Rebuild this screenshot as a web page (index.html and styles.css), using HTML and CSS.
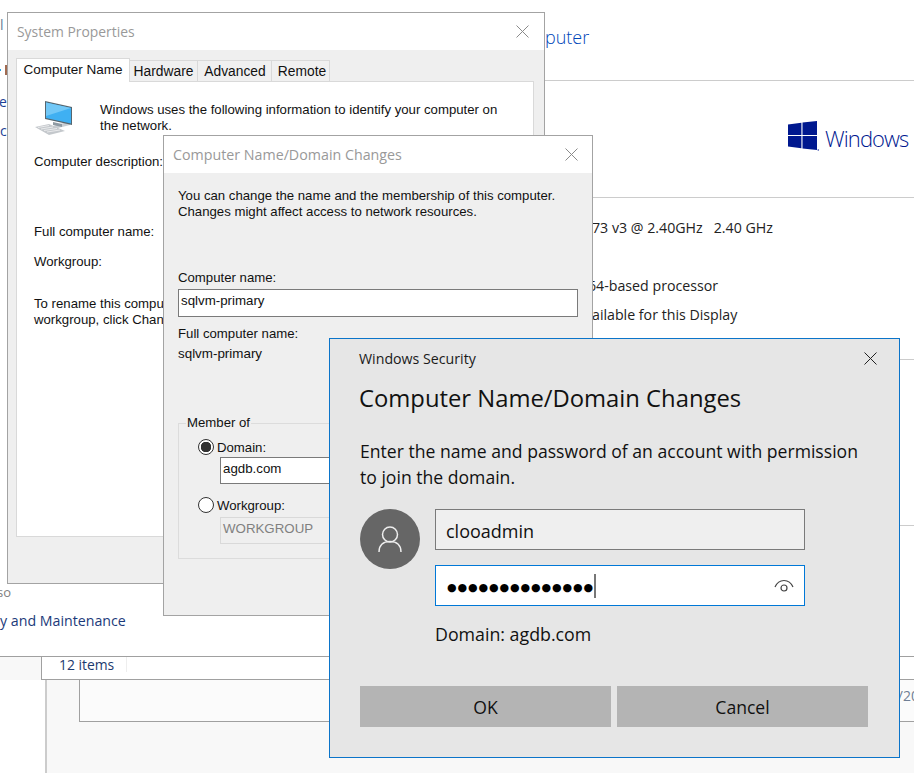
FILE: index.html
```html
<!DOCTYPE html>
<html lang="en">
<head>
    <meta charset="UTF-8">
    <meta name="viewport" content="width=device-width, initial-scale=1.0">
    <title>Computer Name/Domain Changes</title>
    <link rel="stylesheet" href="styles.css">
</head>
<body>
<div class="desktop">

    <!-- Control Panel page behind the dialogs -->
    <div class="cp-top">
        <div class="cp-side">
            <span class="frag-l">l</span>
            <div class="frag-tick"><span class="tick-blue"></span><span class="tick-brown"></span></div>
            <span class="frag-e">e</span>
            <span class="frag-c">ce</span>
            <span class="frag-so">so</span>
            <span class="frag-link">y and Maintenance</span>
        </div>
        <div class="cp-main">
            <div class="cp-head"><span class="cp-title">puter</span></div>
            <div class="cp-edition">
                <svg class="win-logo" viewBox="0 0 31 30" width="31" height="30">
                    <path d="M0 3.6 13.4 1.8V14H0ZM14.5 1.6 29 0V14H14.5ZM0 15H13.4V27.2L0 25.4ZM14.5 15H29V29L14.5 27.4ZM29.6 28.4H31V29.4H29.6Z"/>
                </svg>
                <span class="win-word">Windows</span>
            </div>
            <div class="cp-specs">
                <div class="spec spec-cpu">73 v3 @ 2.40GHz&nbsp;&nbsp; 2.40 GHz</div>
                <div class="spec spec-type">64-based processor</div>
                <div class="spec spec-pen">ailable for this Display</div>
            </div>
            <div class="cp-blank"></div>
        </div>
    </div>
    <div class="status-bar">
        <div class="status-items"><span class="status-count">12 items</span></div>
    </div>
    <div class="list-pane">
        <div class="list-row"><span class="list-date">/20</span></div>
    </div>

    <!-- System Properties -->
    <section class="window win-system">
        <div class="titlebar">
            <span class="titlebar-text">System Properties</span>
            <svg class="close" viewBox="0 0 13 13" width="13" height="13"><path d="M.5.5l12 12M12.5.5l-12 12"/></svg>
        </div>
        <div class="window-body sys-body">
            <div class="tabs">
                <span class="tab tab-active">Computer Name</span>
                <span class="tab tab-hw">Hardware</span>
                <span class="tab tab-adv">Advanced</span>
                <span class="tab tab-rem">Remote</span>
            </div>
            <div class="tab-panel">
                <div class="intro">
                    <svg class="pc-icon" viewBox="0 0 40 36" width="40" height="36">
                        <path d="M16 27l17 -5 3 1 0 2 -16 4z" fill="#c9ced3"/>
                        <path d="M19 22l9 2 0 3-9-2z" fill="#8f9aa3"/>
                        <path d="M11 1 38 7V25L11 19Z" fill="#56666f"/>
                        <path d="M12 2.500 37 8V23.500L12 18Z" fill="#3fb0f2"/>
                        <path d="M12 2.500 37 8 12 16Z" fill="#72c8f7"/>
                        <path d="M1 27 15 24 31 31 15 35Z" fill="#c4c8cc"/>
                        <path d="M4 27.500 15 25.500M7 29 19 27M10 30.500 23 28.500M13 32 26 30" stroke="#f2f3f4" stroke-width=".8" fill="none"/>
                    </svg>
                    <p class="intro-text">Windows uses the following information to identify your computer on<br>the network.</p>
                </div>
                <div class="sys-label sys-desc">Computer description:</div>
                <div class="sys-label sys-full">Full computer name:</div>
                <div class="sys-label sys-group">Workgroup:</div>
                <div class="sys-label sys-rename">To rename this comput<br>workgroup, click Chang</div>
            </div>
        </div>
    </section>

    <!-- Computer Name/Domain Changes -->
    <section class="window win-name">
        <div class="titlebar">
            <span class="titlebar-text">Computer Name/Domain Changes</span>
            <svg class="close" viewBox="0 0 13 13" width="13" height="13"><path d="M.5.5l12 12M12.5.5l-12 12"/></svg>
        </div>
        <div class="window-body name-body">
            <p class="name-intro">You can change the name and the membership of this computer.<br>Changes might affect access to network resources.</p>
            <div class="name-label">Computer name:</div>
            <div class="field field-name">sqlvm-primary</div>
            <div class="full-label">Full computer name:</div>
            <div class="full-value">sqlvm-primary</div>
            <fieldset class="member">
                <legend>Member of</legend>
                <div class="radio-row radio-domain"><span class="radio radio-on"></span>Domain:</div>
                <div class="field field-member">agdb.com</div>
                <div class="radio-row radio-group"><span class="radio"></span>Workgroup:</div>
                <div class="field field-member field-off">WORKGROUP</div>
            </fieldset>
        </div>
    </section>

    <!-- Windows Security credential prompt -->
    <section class="window win-security">
        <div class="sec-head">
            <span class="sec-app">Windows Security</span>
            <svg class="close close-dark" viewBox="0 0 13 13" width="13" height="13"><path d="M.5.5l12 12M12.5.5l-12 12"/></svg>
        </div>
        <h1 class="sec-title">Computer Name/Domain Changes</h1>
        <p class="sec-text">Enter the name and password of an account with permission<br>to join the domain.</p>
        <div class="cred">
            <div class="avatar">
                <svg viewBox="0 0 60 60" width="60" height="60">
                    <circle cx="30" cy="25.500" r="7.500"/>
                    <path d="M19 43c0-7 4.500-10.500 11-10.500S41 36 41 43"/>
                </svg>
            </div>
            <div class="cred-fields">
                <div class="cred-input cred-user">clooadmin</div>
                <div class="cred-input cred-pass">
                    <span class="dots">●●●●●●●●●●●●●●</span><span class="caret"></span>
                    <svg class="eye" viewBox="0 0 20 14" width="20" height="14">
                        <path d="M1 8C3 3.500 6 1.500 10 1.500S17 3.500 19 8"/>
                        <circle cx="10" cy="9" r="3"/>
                    </svg>
                </div>
            </div>
        </div>
        <div class="sec-domain">Domain: agdb.com</div>
        <div class="sec-buttons">
            <button class="sec-btn">OK</button>
            <button class="sec-btn">Cancel</button>
        </div>
    </section>

</div>
</body>
</html>
```

FILE: styles.css
```css
/* General Page Styling */
body {
    margin: 0;
    font-family: 'Liberation Sans', Arial, sans-serif;
    color: #111111;
}

p, h1 {
    margin: 0;
    font-weight: normal;
}

.desktop {
    position: relative;
    width: 914px;
    height: 773px;
    overflow: hidden;
    display: flex;
    flex-direction: column;
    background: #ffffff;
}

/* Control Panel behind the dialogs */
.cp-top {
    display: flex;
    height: 656px;
    font-family: 'Open Sans', sans-serif;
}

.cp-side {
    width: 130px;
    display: flex;
    flex-direction: column;
    white-space: nowrap;
    font-size: 14px;
    line-height: 20px;
}

.frag-l {
    margin-top: 15px;
    color: #6a7f95;
}

.frag-tick {
    display: flex;
    gap: 4px;
    height: 10px;
    margin-top: 30px;
    align-items: center;
}

.tick-blue {
    width: 1px;
    height: 2px;
    background: #29a0e0;
}

.tick-brown {
    width: 2px;
    height: 10px;
    background: #a06a50;
}

.frag-e {
    margin-top: 17px;
    margin-left: -1px;
    color: #1c3f94;
}

.frag-c {
    margin-top: 9px;
    margin-left: 0;
    color: #1c3f94;
}

.frag-so {
    margin-top: 441px;
    margin-left: -3px;
    font-size: 13px;
    color: #808080;
}

.frag-link {
    margin-top: 9px;
    font-size: 14.200px;
    color: #1b3a7a;
}

.cp-main {
    flex: 1;
    display: flex;
    flex-direction: column;
}

.cp-head {
    height: 80px;
    padding-left: 415px;
    border-bottom: 1px solid #cccccc;
    box-sizing: content-box;
}

.cp-title {
    display: block;
    padding-top: 23px;
    font-size: 18px;
    font-weight: 300;
    line-height: 28px;
    color: #0046b8;
}

.cp-edition {
    height: 116px;
    display: flex;
    align-items: flex-start;
    padding-left: 658px;
    border-bottom: 1px solid #cccccc;
}

.win-logo {
    margin-top: 40px;
    fill: #00188f;
}

.win-word {
    margin-left: 6px;
    margin-top: 39px;
    font-size: 22px;
    font-weight: 300;
    line-height: 36px;
    color: #00188f;
    letter-spacing: -0.9px;
}

.cp-specs {
    height: 161px;
    padding-left: 462px;
    border-bottom: 1px solid #cccccc;
    font-size: 14.200px;
    line-height: 20px;
    color: #222222;
}

.spec {
    white-space: nowrap;
}

.spec-cpu {
    margin-top: 20px;
}

.spec-type {
    margin-top: 38px;
    margin-left: -4px;
}

.spec-pen {
    margin-top: 9px;
}

.cp-blank {
    height: 165px;
    border-bottom: 1px solid #cccccc;
}

/* Status bar and file list */
.status-bar {
    height: 23px;
    background: #f8f8f8;
    border-top: 1px solid #a0a0a0;
}

.status-items {
    height: 22px;
    margin-left: 41px;
    padding-left: 17px;
    background: #ffffff;
    border-left: 1px solid #a0a0a0;
    border-bottom: 1px solid #a0a0a0;
    font-family: 'Open Sans', sans-serif;
    font-size: 13.900px;
    line-height: 15px;
    color: #1c3a6e;
}

.status-count {
    display: inline-block;
    padding-right: 12px;
    border-right: 1px solid #eeeeee;
}

.list-pane {
    flex: 1;
    margin-left: 45px;
    background: #f8f8f8;
    border-left: 2px solid #cccccc;
}

.list-row {
    height: 41px;
    margin-left: 32px;
    background: #fbfbfb;
    border-left: 1px solid #a0a0a0;
    border-bottom: 1px solid #a0a0a0;
    display: flex;
    justify-content: flex-end;
    align-items: flex-start;
}

.list-date {
    margin-top: 6px;
    margin-right: -5px;
    font-family: 'Open Sans', sans-serif;
    font-size: 14px;
    line-height: 20px;
    color: #6f7f95;
}

/* Classic dialogs */
.window {
    position: absolute;
    box-sizing: border-box;
    display: flex;
    flex-direction: column;
    border: 1px solid #a3a3a3;
    background: #efefef;
}

.win-system {
    left: 7px;
    top: 12px;
    width: 538px;
    height: 572px;
}

.win-name {
    left: 163px;
    top: 135px;
    width: 430px;
    height: 481px;
}

.titlebar {
    height: 37px;
    flex: none;
    display: flex;
    align-items: center;
    justify-content: space-between;
    padding: 0 14px 0 9px;
    background: #ffffff;
}

.win-system .titlebar {
    padding-right: 15px;
}

.titlebar-text {
    font-family: 'Open Sans', sans-serif;
    font-size: 13.900px;
    color: #999999;
}

.win-name .titlebar-text {
    font-size: 14.250px;
}

.close {
    stroke: #8a8a8a;
    stroke-width: 1;
    fill: none;
}

.close-dark {
    stroke: #222222;
}

.window-body {
    flex: 1;
    min-height: 0;
    font-size: 13.200px;
    line-height: 16px;
}

/* System Properties tabs */
.sys-body {
    padding: 8px 10px 0 8px;
}

.tabs {
    display: flex;
    align-items: flex-end;
    height: 23px;
    font-size: 13.800px;
}

.tab {
    box-sizing: border-box;
    height: 21px;
    padding-top: 3px;
    text-align: center;
    background: #f0f0f0;
    border: 1px solid #d9d9d9;
    border-bottom: none;
    border-left: none;
}

.tab-active {
    position: relative;
    z-index: 1;
    width: 114px;
    height: 24px;
    margin-bottom: -1px;
    padding-top: 3px;
    font-size: 13.500px;
    background: #ffffff;
    border-left: 1px solid #d9d9d9;
}

.tab-hw {
    width: 68px;
}

.tab-adv {
    width: 74px;
    padding-left: 1px;
}

.tab-rem {
    width: 58px;
    padding-left: 3px;
}

.tab-panel {
    box-sizing: border-box;
    height: 456px;
    padding: 0 17px;
    background: #ffffff;
    border: 1px solid #d9d9d9;
    white-space: nowrap;
}

.intro {
    display: flex;
    margin-top: 20px;
}

.pc-icon {
    flex: none;
    margin-top: -2px;
    margin-right: 26px;
}

.sys-desc {
    margin-top: 18px;
}

.sys-full {
    margin-top: 54px;
}

.sys-group {
    margin-top: 14px;
}

.sys-rename {
    margin-top: 26px;
}

/* Computer Name/Domain Changes body */
.name-body {
    padding: 15px 14px 0;
}

.name-label {
    margin-top: 50px;
}

.field {
    box-sizing: border-box;
    height: 28px;
    padding: 3px 2px;
    background: #ffffff;
    border: 1px solid #7a7a7a;
    font-size: 13.300px;
}

.field-name {
    margin-top: 3px;
}

.full-label {
    margin-top: 9px;
}

.full-value {
    margin-top: 4px;
    font-size: 13.400px;
}

.member {
    box-sizing: border-box;
    height: 145px;
    margin: 52px 0 0;
    padding: 0 0 0 19px;
    border: 1px solid #dcdcdc;
}

.member legend {
    margin-left: -12px;
    padding: 0 1px;
    line-height: 18px;
}

.radio-row {
    display: flex;
    align-items: flex-start;
    gap: 3px;
    height: 16px;
    line-height: 18px;
}

.radio-domain {
    margin-top: 7px;
}

.radio-group {
    margin-top: 13px;
}

.radio {
    box-sizing: border-box;
    width: 16px;
    height: 16px;
    background: #ffffff;
    border: 1px solid #333333;
    border-radius: 50%;
}

.radio-on {
    background: radial-gradient(circle, #333333 0 5px, #ffffff 5.500px);
}

.field-member {
    width: 300px;
    height: 27px;
    margin-top: 2px;
    margin-left: 22px;
}

.field-off {
    margin-top: 4px;
    background: #efefef;
    border-color: #d9d9d9;
    color: #808080;
}

/* Windows Security prompt */
.win-security {
    left: 329px;
    top: 338px;
    width: 571px;
    height: 420px;
    padding-left: 30px;
    background: #e6e6e6;
    border-color: #0b74c9;
    font-family: 'Open Sans', sans-serif;
}

.sec-head {
    display: flex;
    align-items: center;
    justify-content: space-between;
    height: 20px;
    margin-top: 9px;
    margin-left: -1px;
    padding-right: 22px;
}

.sec-app {
    font-size: 14.200px;
    color: #1a1a1a;
}

.sec-title {
    margin-top: 14px;
    margin-left: -1px;
    font-size: 23.800px;
    line-height: 32px;
}

.sec-text {
    margin-top: 24px;
    font-size: 17.600px;
    line-height: 26px;
}

.cred {
    display: flex;
    gap: 15px;
    margin-top: 19px;
}

.avatar {
    width: 60px;
    height: 60px;
    border-radius: 50%;
    background: #666666;
}

.avatar svg {
    display: block;
    fill: none;
    stroke: #eeeeee;
    stroke-width: 1.500;
}

.cred-fields {
    width: 370px;
    display: flex;
    flex-direction: column;
    gap: 15px;
}

.cred-input {
    box-sizing: border-box;
    height: 41px;
    display: flex;
    align-items: center;
    padding-left: 10px;
    font-size: 18px;
    border: 1px solid #7a7a7a;
    background: #efefef;
}

.cred-user {
    padding-top: 2px;
}

.cred-pass {
    padding-left: 11px;
    background: #ffffff;
    border-color: #0078d7;
}

.dots {
    padding-top: 3px;
    font-family: 'DejaVu Sans', sans-serif;
    font-size: 11px;
    letter-spacing: 0.900px;
    color: #000000;
}

.caret {
    width: 2px;
    height: 24px;
    background: #777777;
}

.eye {
    margin-left: auto;
    margin-right: 10px;
    fill: none;
    stroke: #444444;
    stroke-width: 1.200;
}

.sec-domain {
    margin-top: 16px;
    margin-left: 75px;
    font-size: 17.800px;
    line-height: 24px;
}

.sec-buttons {
    display: flex;
    gap: 6px;
    margin-top: 40px;
}

.sec-btn {
    width: 251px;
    height: 41px;
    padding: 0;
    font-family: inherit;
    font-size: 17.600px;
    color: #111111;
    background: #b4b4b4;
    border: none;
}
```
